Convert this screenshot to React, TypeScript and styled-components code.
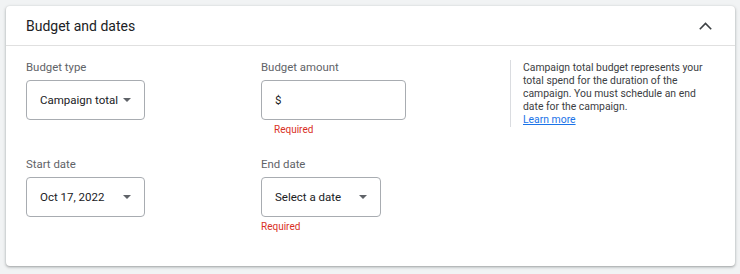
import React from "react";
import styled, { createGlobalStyle } from "styled-components";

const Global = createGlobalStyle`
  html, body { margin: 0; padding: 0; background: #f1f3f4; }
  body { font-family: Roboto, "Noto Sans", Arial, sans-serif; -webkit-font-smoothing: antialiased; }
`;

const Page = styled.div`
  padding: 6px 5px 8px 6px;
  box-sizing: border-box;
  width: 740px;
  height: 274px;
`;

const Card = styled.section`
  background: #fff;
  border-radius: 4px;
  box-shadow: 0 1px 2px rgba(60, 64, 67, 0.3), 0 1px 3px 1px rgba(60, 64, 67, 0.15);
  height: 260px;
  box-sizing: border-box;
`;

const Header = styled.header`
  display: flex;
  align-items: center;
  justify-content: space-between;
  height: 39px;
  padding: 0 23px 0 20px;
  border-bottom: 1px solid #e0e0e0;
`;

const Title = styled.h2`
  margin: 0;
  font-size: 14px;
  font-weight: 400;
  color: #202124;
`;

const Body = styled.div`
  display: grid;
  grid-template-columns: 235px 249px 1fr;
  grid-template-rows: auto auto;
  row-gap: 22px;
  padding: 15px 20px 0 20px;
`;

const Field = styled.div`
  display: flex;
  flex-direction: column;
  align-items: flex-start;
`;

const Label = styled.div`
  font-size: 11.4px;
  line-height: 13px;
  color: #5f6368;
  height: 13px;
  margin-bottom: 6px;
`;

const Box = styled.div<{ $w: number }>`
  width: ${(p) => p.$w}px;
  height: 40px;
  box-sizing: border-box;
  border: 1px solid #a8acb1;
  border-radius: 4px;
  display: flex;
  align-items: center;
  justify-content: space-between;
  padding: 0 13px 0 13px;
  font-size: 11.5px;
  color: #202124;
  white-space: nowrap;
`;

const Arrow = styled.span`
  width: 0;
  height: 0;
  border-left: 4px solid transparent;
  border-right: 4px solid transparent;
  border-top: 4px solid #5f6368;
`;

const ErrorText = styled.div<{ $indent?: boolean }>`
  font-size: 10px;
  line-height: 12px;
  color: #d93025;
  margin-top: 4px;
  height: 12px;
  padding-left: ${(p) => (p.$indent ? 13 : 0)}px;
`;

const Info = styled.div`
  grid-row: 1;
  grid-column: 3;
  align-self: start;
  margin-top: -1px;
  border-left: 1px solid #dadce0;
  padding: 1px 0 1px 12px;
  font-size: 10.4px;
  line-height: 13px;
  color: #3c4043;
  width: 188px;
`;

const Link = styled.a`
  color: #1a73e8;
  text-decoration: underline;
  display: block;
`;

const Chevron = () => (
  <svg width="13" height="8" viewBox="0 0 13 8" fill="none">
    <path d="M0.8 7.2L6.5 1.4L12.2 7.2" stroke="#3c4043" strokeWidth="1.6" />
  </svg>
);

export default function App() {
  return (
    <>
      <Global />
      <Page>
        <Card>
          <Header>
            <Title>Budget and dates</Title>
            <Chevron />
          </Header>
          <Body>
            <Field>
              <Label>Budget type</Label>
              <Box $w={119}>
                <span>Campaign total</span>
                <Arrow />
              </Box>
            </Field>
            <Field>
              <Label>Budget amount</Label>
              <Box $w={145}>
                <span>$</span>
              </Box>
              <ErrorText $indent>Required</ErrorText>
            </Field>
            <Info>
              Campaign total budget represents your total spend for the duration of the campaign. You must schedule an end date for the campaign.
              <Link href="#">Learn more</Link>
            </Info>
            <Field>
              <Label>Start date</Label>
              <Box $w={119}>
                <span>Oct 17, 2022</span>
                <Arrow />
              </Box>
            </Field>
            <Field>
              <Label>End date</Label>
              <Box $w={120}>
                <span>Select a date</span>
                <Arrow />
              </Box>
              <ErrorText>Required</ErrorText>
            </Field>
          </Body>
        </Card>
      </Page>
    </>
  );
}
